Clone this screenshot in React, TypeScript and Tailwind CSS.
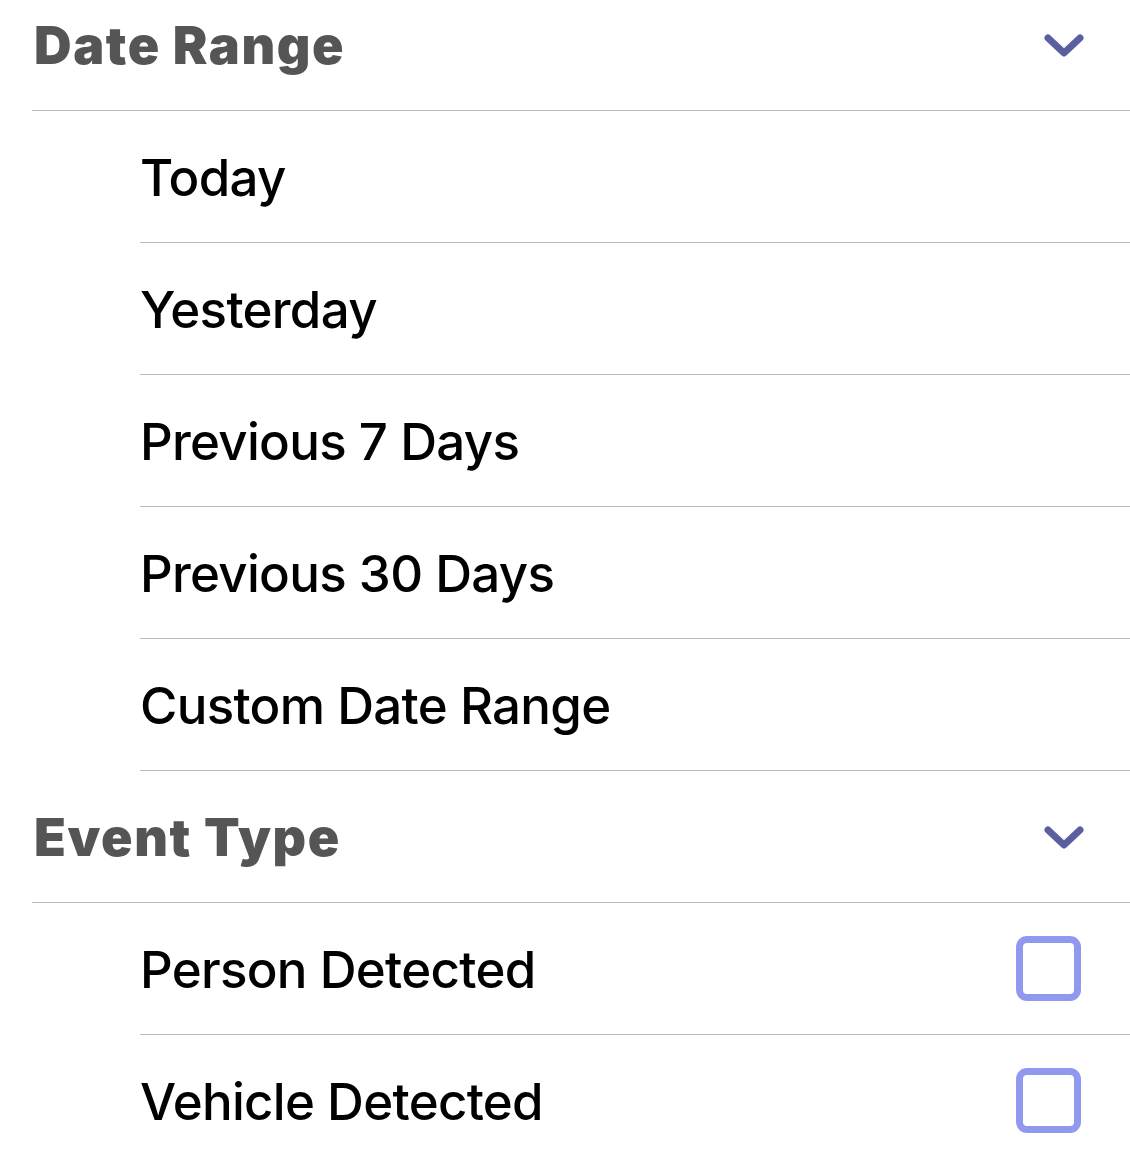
import React from "react";

const DATE_OPTIONS = ["Today", "Yesterday", "Previous 7 Days", "Previous 30 Days", "Custom Date Range"];
const EVENT_OPTIONS = ["Person Detected", "Vehicle Detected"];

function Chevron() {
  return (
    <svg width="44" height="30" viewBox="0 0 44 30" className="mt-[5px] shrink-0">
      <path d="M6 6 L22 21 L38 6" fill="none" stroke="#5b5e9f" strokeWidth="7" strokeLinecap="round" strokeLinejoin="round" />
    </svg>
  );
}

function SectionHeader({ title }: { title: string }) {
  return (
    <div className="ml-[32px] flex h-[132px] items-center justify-between border-b border-[#bdbdbd] pl-[2px] pr-[44px]">
      <span className="pt-[2px] text-[52px] font-black tracking-[1.6px] text-[#555555]">{title}</span>
      <Chevron />
    </div>
  );
}

function Row({ label, checkbox }: { label: string; checkbox?: boolean }) {
  return (
    <div className="ml-[140px] flex h-[132px] items-center justify-between border-b border-[#bdbdbd] pr-[49px]">
      <span className="pt-[3px] text-[51px] font-medium tracking-[-0.7px] text-black">{label}</span>
      {checkbox && (
        <div className="h-[65px] w-[65px] rounded-[11px] border-[7px] border-[#9198f0]" />
      )}
    </div>
  );
}

export default function App() {
  return (
    <div className="h-[1150px] w-[1130px] overflow-hidden bg-white" style={{ fontFamily: "Inter, 'Noto Sans', sans-serif" }}>
      <div className="-mt-[21px]">
        <SectionHeader title="Date Range" />
        {DATE_OPTIONS.map((o) => (
          <Row key={o} label={o} />
        ))}
        <SectionHeader title="Event Type" />
        {EVENT_OPTIONS.map((o) => (
          <Row key={o} label={o} checkbox />
        ))}
      </div>
    </div>
  );
}
